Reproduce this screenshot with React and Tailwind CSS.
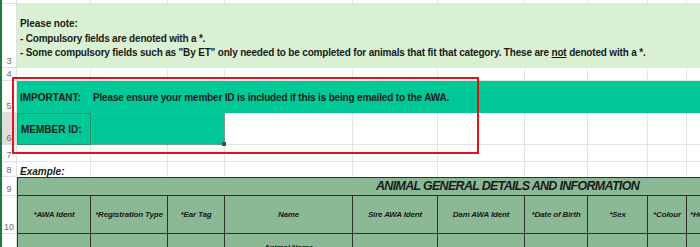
import React from "react";

function RH({ n, sel }) {
  return (
    <div
      className={`flex items-end justify-center overflow-hidden border-b border-r border-[#e1e1e1] pb-[1px] text-[9px] leading-none text-[#6b6b6b] ${
        sel ? "bg-[#dedede]" : "bg-white"
      }`}
    >
      {n}
    </div>
  );
}

function G() {
  return <div className="border-b border-r border-[#e4e4e4]" />;
}

function Blank10() {
  return (
    <>
      <G />
      <G />
      <G />
      <G />
      <G />
      <G />
      <G />
      <G />
      <G />
      <G />
    </>
  );
}

const heads = [
  "*AWA Ident",
  "*Registration Type",
  "*Ear Tag",
  "Name",
  "Sire AWA Ident",
  "Dam AWA Ident",
  "*Date of Birth",
  "*Sex",
  "*Colour",
];

export default function App() {
  return (
    <div className="relative h-[247px] w-[700px] overflow-hidden border-l-2 border-[#1f7a45] bg-white font-[family-name:'Liberation_Sans','Arial',sans-serif] text-[#1a1a1a]">
      <div className="grid grid-cols-[15px_74px_77px_57px_128px_85px_87px_63px_60px_39px_120px] grid-rows-[4px_64px_13px_32px_32px_17px_15px_19px_38px_40px]">
        {/* row 2 */}
        <RH n="2" />
        <Blank10 />

        {/* row 3 */}
        <RH n="3" />
        <div className="col-span-10 flex flex-col justify-center whitespace-nowrap bg-[#daf0d3] pl-[3px] pt-[6px] text-[10px] font-bold leading-[14.5px]">
          <div className="tracking-[-0.1px]">Please note:</div>
          <div className="tracking-[-0.2px]">- Compulsory fields are denoted with a *.</div>
          <div className="tracking-[-0.18px]">
            - Some compulsory fields such as "By ET" only needed to be completed for animals that fit that
            category. These are <span className="underline">not</span> denoted with a *.
          </div>
        </div>

        {/* row 4 */}
        <RH n="4" />
        <Blank10 />

        {/* row 5 */}
        <RH n="5" />
        <div className="col-span-10 flex items-center whitespace-nowrap bg-[#00c997] text-[10px] font-bold">
          <span className="w-[74px] pl-[3px]">IMPORTANT:</span>
          <span className="pl-[2px] tracking-[-0.17px]">
            Please ensure your member ID is included if this is being emailed to the AWA.
          </span>
        </div>

        {/* row 6 */}
        <RH n="6" sel />
        <div className="flex items-center border border-[#2e8b6b] bg-[#00c997] pl-[3px] text-[10px] font-bold">
          MEMBER ID:
        </div>
        <div className="relative col-span-2 border border-[#6f9f8f] bg-[#00c997]">
          <div className="absolute -bottom-[2px] -right-[2px] h-[4px] w-[4px] bg-[#2b5e48]" />
        </div>
        <G />
        <G />
        <G />
        <G />
        <G />
        <G />
        <G />

        {/* row 7 */}
        <RH n="7" />
        <Blank10 />

        {/* row 8 */}
        <RH n="8" />
        <div className="flex items-end whitespace-nowrap border-r border-[#e4e4e4] pl-[3px] text-[10px] font-bold italic leading-none">
          Example:
        </div>
        <div className="border-r border-[#e4e4e4]" />
        <div className="border-r border-[#e4e4e4]" />
        <div className="border-r border-[#e4e4e4]" />
        <div className="border-r border-[#e4e4e4]" />
        <div className="border-r border-[#e4e4e4]" />
        <div className="border-r border-[#e4e4e4]" />
        <div className="border-r border-[#e4e4e4]" />
        <div className="border-r border-[#e4e4e4]" />
        <div className="border-r border-[#e4e4e4]" />

        {/* row 9 */}
        <RH n="9" />
        <div className="col-span-10 flex items-center whitespace-nowrap border-y border-l border-[#2f2f2f] bg-[#8bb996] pl-[358px] text-[12.5px] font-bold italic tracking-[-0.7px]">
          ANIMAL GENERAL DETAILS AND INFORMATION
        </div>

        {/* row 10 */}
        <RH n="10" />
        {heads.map((h, i) => (
          <div
            key={h}
            className={`flex items-center justify-center whitespace-nowrap border-b border-r border-[#2f2f2f] bg-[#8bb996] text-[8px] font-bold italic tracking-[-0.15px] ${
              i === 0 ? "border-l" : ""
            }`}
          >
            {h}
          </div>
        ))}
        <div className="flex items-center whitespace-nowrap border-b border-r border-[#2f2f2f] bg-[#8bb996] pl-[3px] text-[8px] font-bold italic tracking-[-0.15px]">
          *Horned/Polled
        </div>

        {/* row 11 */}
        <RH n="11" />
        <div className="border-l border-r border-[#2f2f2f] bg-[#8bb996]" />
        <div className="border-r border-[#2f2f2f] bg-[#8bb996]" />
        <div className="border-r border-[#2f2f2f] bg-[#8bb996]" />
        <div className="flex justify-center border-r border-[#2f2f2f] bg-[#8bb996] pt-[8px] text-[8px] font-bold italic tracking-[-0.15px]">
          Animal Name
        </div>
        <div className="border-r border-[#2f2f2f] bg-[#8bb996]" />
        <div className="border-r border-[#2f2f2f] bg-[#8bb996]" />
        <div className="border-r border-[#2f2f2f] bg-[#8bb996]" />
        <div className="border-r border-[#2f2f2f] bg-[#8bb996]" />
        <div className="border-r border-[#2f2f2f] bg-[#8bb996]" />
        <div className="border-r border-[#2f2f2f] bg-[#8bb996]" />
      </div>

      {/* red annotation box */}
      <div className="pointer-events-none absolute left-[10px] top-[77px] h-[77px] w-[467px] border-2 border-[#e3131b]" />
    </div>
  );
}
